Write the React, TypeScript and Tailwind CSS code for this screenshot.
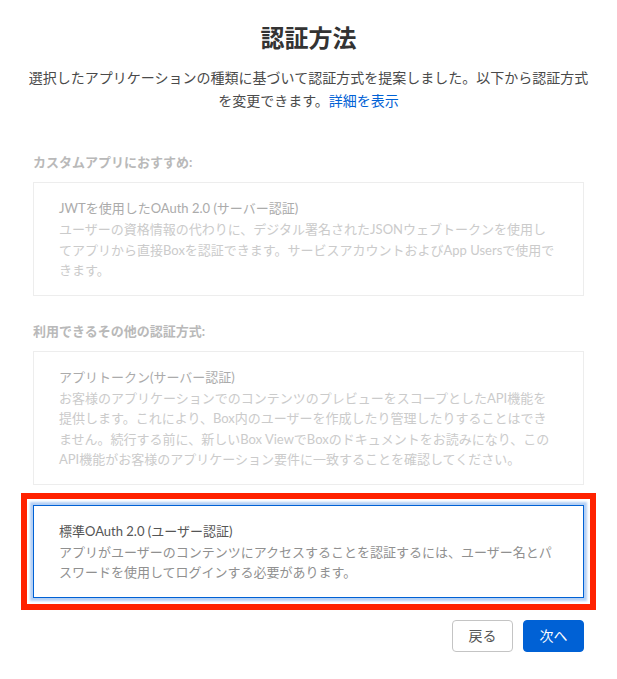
const methods = {
  recommended: {
    title: "JWTを使用したOAuth 2.0 (サーバー認証)",
    text: "ユーザーの資格情報の代わりに、デジタル署名されたJSONウェブトークンを使用してアプリから直接Boxを認証できます。サービスアカウントおよびApp Usersで使用できます。",
  },
  appToken: {
    title: "アプリトークン(サーバー認証)",
    text: "お客様のアプリケーションでのコンテンツのプレビューをスコープとしたAPI機能を提供します。これにより、Box内のユーザーを作成したり管理したりすることはできません。続行する前に、新しいBox ViewでBoxのドキュメントをお読みになり、このAPI機能がお客様のアプリケーション要件に一致することを確認してください。",
  },
  standard: {
    title: "標準OAuth 2.0 (ユーザー認証)",
    text: "アプリがユーザーのコンテンツにアクセスすることを認証するには、ユーザー名とパスワードを使用してログインする必要があります。",
  },
};

function DisabledOption({ title, text }: { title: string; text: string }) {
  return (
    <div className="mt-[10px] border border-[#ededed] px-[25px] py-[14px]">
      <div className="text-[13px] leading-[22px] text-[#ababab]">{title}</div>
      <p className="text-[13px] leading-[20.5px] text-[#cbcbcb]">{text}</p>
    </div>
  );
}

export default function App() {
  return (
    <div
      className="min-h-screen bg-white"
      style={{ fontFamily: "Lato, 'Noto Sans CJK JP', sans-serif" }}
    >
      <div className="mx-auto w-[551px] pt-[23px] pb-[28px]">
        <h1 className="text-center text-[24px] font-bold leading-[30px] text-[#333]">
          認証方法
        </h1>
        <p className="-mx-[10px] mt-[13px] text-center text-[14px] leading-[23px] text-[#4a4a4a]">
          <span>
            選択したアプリケーションの種類に基づいて認証方式を提案しました。以下から認証方式を変更できます。
          </span>
          <a className="text-[#0061d5]">詳細を表示</a>
        </p>

        <div className="mt-[40px] text-[13px] font-bold leading-[20px] text-[#b9b9b9]">
          カスタムアプリにおすすめ:
        </div>
        <DisabledOption {...methods.recommended} />

        <div className="mt-[25px] text-[13px] font-bold leading-[20px] text-[#b9b9b9]">
          利用できるその他の認証方式:
        </div>
        <DisabledOption {...methods.appToken} />

        {/* highlighted selection */}
        <div className="-mx-[12px] mt-[8px] border-[6px] border-[#ff2200] p-[6px]">
          <div className="border border-[#0061d5] px-[25px] py-[14px] shadow-[0_0_2px_3px_rgba(120,170,235,0.55)]">
            <div className="text-[13px] leading-[22px] text-[#555]">
              {methods.standard.title}
            </div>
            <p className="text-[13px] leading-[20.5px] text-[#909090]">
              {methods.standard.text}
            </p>
          </div>
        </div>

        <div className="mt-[10px] flex justify-end gap-[10px]">
          <button className="h-[32px] w-[61px] rounded-[4px] border border-[#c4c4c4] bg-white text-[14px] text-[#555]">
            戻る
          </button>
          <button className="h-[32px] w-[61px] rounded-[4px] border border-[#0061d5] bg-[#0061d5] text-[14px] text-white">
            次へ
          </button>
        </div>
      </div>
    </div>
  );
}
